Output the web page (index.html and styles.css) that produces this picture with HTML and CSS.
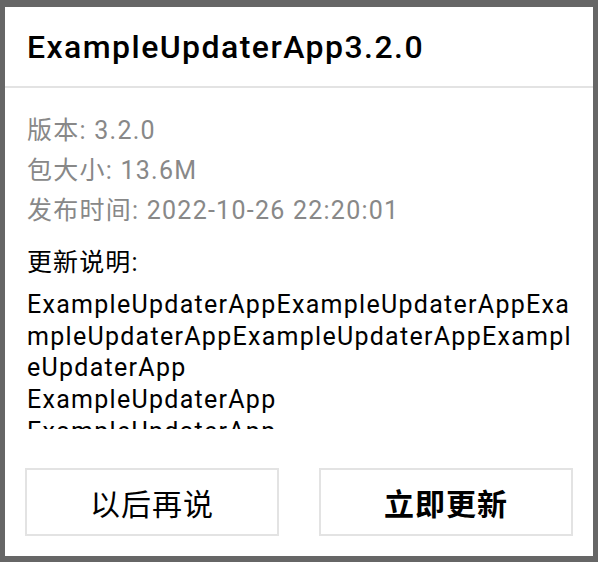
FILE: index.html
```html
<!DOCTYPE html>
<html lang="zh">
<head>
<meta charset="utf-8">
<link rel="stylesheet" href="styles.css">
</head>
<body>
<div class="dialog">
  <div class="header">
    <h1 class="title">ExampleUpdaterApp3.2.0</h1>
  </div>
  <div class="body">
    <div class="info">版本: 3.2.0</div>
    <div class="info">包大小: 13.6M</div>
    <div class="info">发布时间: 2022-10-26 22:20:01</div>
    <div class="notes-label">更新说明:</div>
    <div class="notes">ExampleUpdaterAppExampleUpdaterAppExampleUpdaterAppExampleUpdaterAppExampleUpdaterApp<br>ExampleUpdaterApp<br>ExampleUpdaterApp<br>ExampleUpdaterApp</div>
  </div>
  <div class="actions">
    <button class="btn">以后再说</button>
    <button class="btn btn-primary">立即更新</button>
  </div>
</div>
</body>
</html>
```

FILE: styles.css
```css
html, body {
  margin: 0;
  padding: 0;
  background: #666666;
  height: 562px;
  overflow: hidden;
}
body {
  padding: 7px 5px 6px 5px;
  box-sizing: border-box;
  font-family: Roboto, "Noto Sans CJK SC", sans-serif;
}
.dialog {
  background: #ffffff;
  height: 549px;
  display: flex;
  flex-direction: column;
}
.header {
  height: 79px;
  border-bottom: 2px solid #e3e3e3;
  display: flex;
  align-items: center;
  padding: 0 20px 0 22px;
  flex: none;
}
.title {
  margin: 0;
  font-size: 32px;
  font-weight: 500;
  color: #000;
  letter-spacing: 1.45px;
}
.body {
  padding: 23px 18px 0 22px;
  display: flex;
  flex-direction: column;
}
.info {
  font-size: 25px;
  line-height: 40px;
  color: #888888;
  letter-spacing: 1.25px;
}
.notes-label {
  font-size: 25px;
  line-height: 40px;
  color: #000;
  letter-spacing: 1.1px;
  margin-top: 12px;
}
.notes {
  font-size: 25px;
  line-height: 31.7px;
  color: #000;
  letter-spacing: 1.28px;
  height: 140px;
  overflow: hidden;
  word-break: break-all;
  margin-top: 6px;
}
.actions {
  margin-top: auto;
  display: flex;
  gap: 40px;
  padding: 0 20px 20px 20px;
}
.btn {
  flex: 1;
  height: 68px;
  background: #fff;
  border: 2px solid #e3e3e3;
  font-family: Roboto, "Noto Sans CJK SC", sans-serif;
  font-size: 30px;
  letter-spacing: 1px;
  color: #000;
  padding: 0;
}
.btn-primary {
  font-weight: 700;
}
```
